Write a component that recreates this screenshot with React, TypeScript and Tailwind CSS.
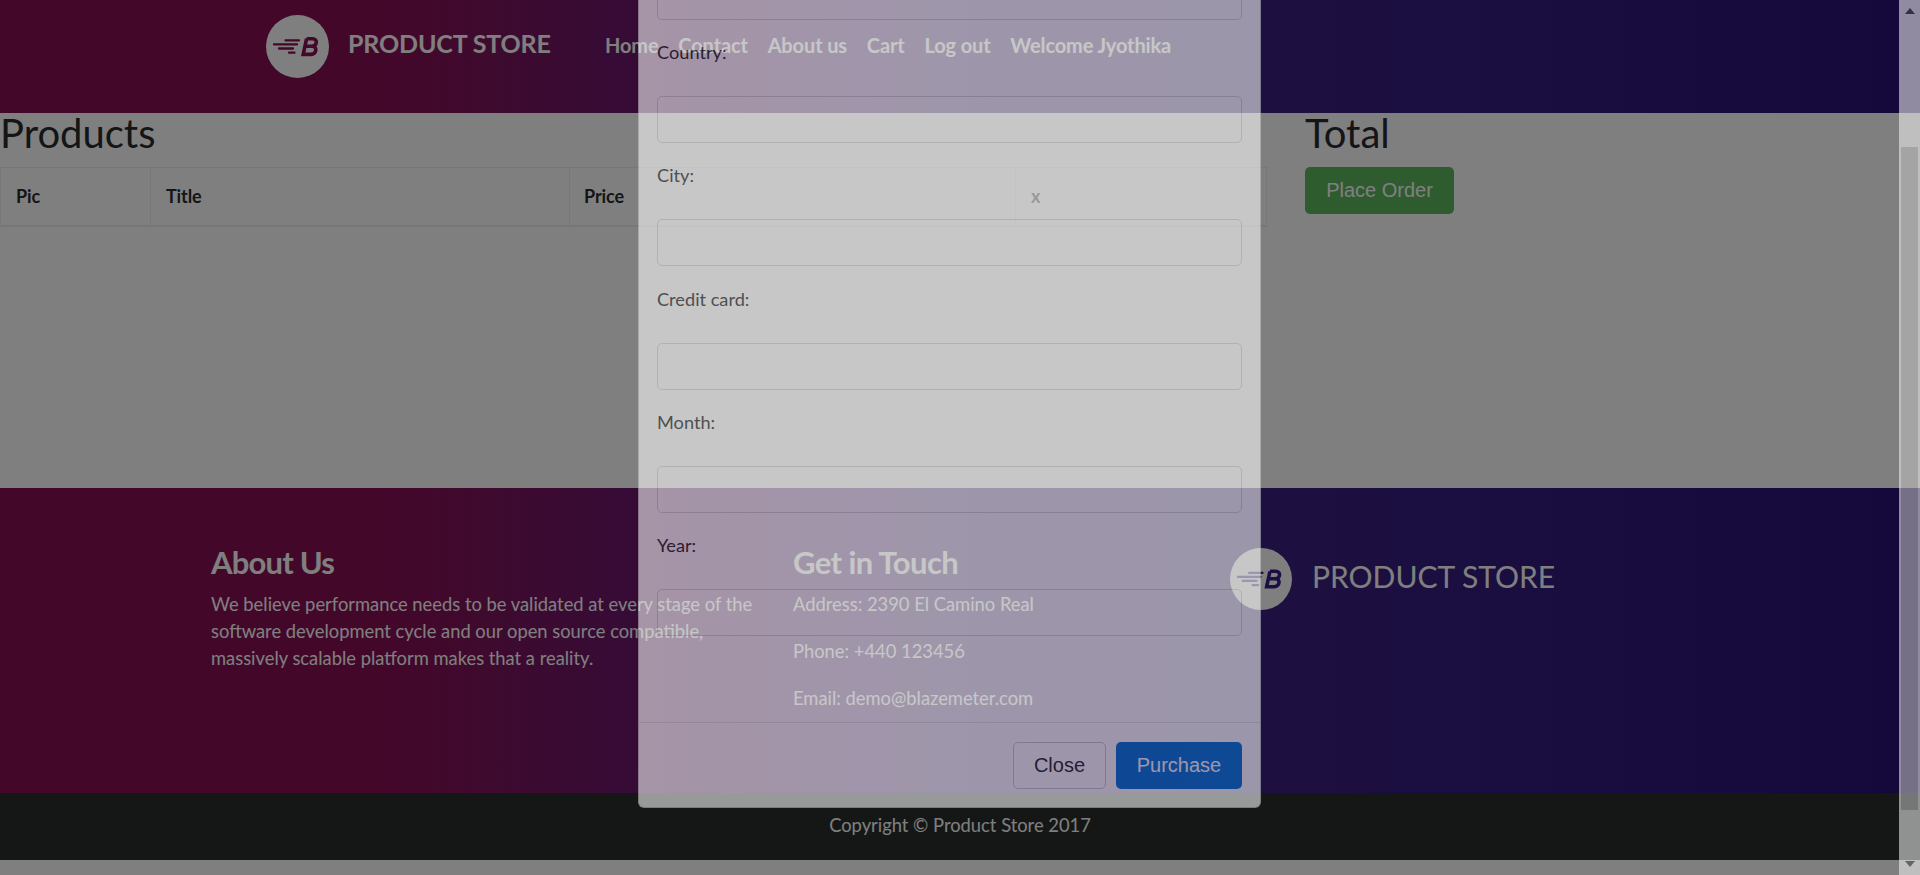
import React from "react";

const gradient =
  "bg-[linear-gradient(90deg,#860f54_0%,#860f54_20%,#7e145c_25%,#6e176b_32%,#5a1a76_40%,#44207f_50%,#3c2282_64%,#341a80_80%,#2a1074_100%)]";

function Logo({ className, ink }: { className: string; ink: string }) {
  return (
    <svg viewBox="0 0 63 63" className={className}>
      <circle cx="31.5" cy="31.5" r="31.5" fill="#fff" />
      <g stroke={ink} strokeWidth="2.3" strokeLinecap="round" fill="none">
        <path d="M19.5 25.3H33M8 29.3H31M13 33.5H27M23 37.7H28.5" />
      </g>
      <g stroke={ink} strokeWidth="3.6" fill="none" strokeLinejoin="miter">
        <path d="M40.6 23.7H46.5C52 23.7 51.4 31.2 46 31.2H39.2M46 31.2C51.8 31.2 50.6 39.4 45 39.4H37.2L40.6 23.7" />
      </g>
    </svg>
  );
}

const navItems = ["Home", "Contact", "About us", "Cart", "Log out", "Welcome Jyothika"];

function Header() {
  return (
    <header className={`flex h-[113px] items-start pl-[266px] text-white ${gradient}`}>
      <Logo className="mt-[15px] h-[63px] w-[63px] shrink-0" ink="#860f54" />
      <span className="mt-[23px] ml-[19px] w-[257px] text-[25px] leading-[40px] font-bold tracking-[-0.15px]">
        PRODUCT STORE
      </span>
      <nav className="mt-[31px] flex gap-[19.8px] text-[20px] leading-[28px] font-bold tracking-[-0.12px]">
        {navItems.map((item) => (
          <a key={item} className="whitespace-nowrap">
            {item}
          </a>
        ))}
      </nav>
    </header>
  );
}

function Cart() {
  return (
    <main className="flex h-[375px] bg-white text-[#292b2c]">
      <section className="w-[1267px]">
        <h2 className="h-[54px] text-[40px] leading-[40px]">Products</h2>
        <div className="grid h-[60px] grid-cols-[150px_419px_446px_252px] border border-b-2 border-[#eceeef] text-[18px] leading-[27px] font-bold tracking-[-0.1px]">
          <div className="border-r border-[#eceeef] px-[15px] pt-[15px]">Pic</div>
          <div className="border-r border-[#eceeef] px-[15px] pt-[15px]">Title</div>
          <div className="border-r border-[#eceeef] px-[14px] pt-[15px]">Price</div>
          <div className="px-[15px] pt-[15px]">x</div>
        </div>
      </section>
      <section className="ml-[38px]">
        <h2 className="h-[54px] text-[40px] leading-[40px]">Total</h2>
        <button className="h-[47px] w-[149px] rounded-[5px] bg-[#5cb85c] pb-[2px] font-['Liberation_Sans',sans-serif] text-[20px] text-white">
          Place Order
        </button>
      </section>
    </main>
  );
}

function Footer() {
  return (
    <footer className="text-white">
      <div className={`flex h-[305px] pl-[211px] text-[18.35px] leading-[27px] ${gradient}`}>
        <section className="mt-[56px] w-[582px]">
          <h4 className="mb-[11px] text-[31px] leading-[36px] font-bold tracking-[-0.8px]">About Us</h4>
          <p className="w-[560px]">
            We believe performance needs to be validated at every stage of the software development
            cycle and our open source compatible, massively scalable platform makes that a reality.
          </p>
        </section>
        <section className="mt-[56px] w-[437px]">
          <h4 className="mb-[11px] text-[31px] leading-[36px] font-bold tracking-[-0.6px]">
            Get in Touch
          </h4>
          <div className="flex flex-col gap-[20px]">
            <p>Address: 2390 El Camino Real</p>
            <p>Phone: +440 123456</p>
            <p>Email: demo@blazemeter.com</p>
          </div>
        </section>
        <section className="mt-[60px] flex gap-[20px]">
          <Logo className="h-[62px] w-[62px] shrink-0" ink="#381d8a" />
          <span className="mt-[9px] text-[30px] leading-[38px] whitespace-nowrap">PRODUCT STORE</span>
        </section>
      </div>
      <div className="h-[67px] bg-[#2b2f2d] pt-[19px] text-center text-[18.35px] leading-[27px]">
        Copyright © Product Store 2017
      </div>
    </footer>
  );
}

const fields = ["Country:", "City:", "Credit card:", "Month:", "Year:"];

function OrderDialog() {
  return (
    <div className="absolute inset-0 flex opacity-[0.56]">
      <div className="ml-[638px] h-[808px] w-[623px] rounded-b-[6px] border border-t-0 border-black/20 bg-white text-[18.2px] leading-[27px] text-[#292b2c]">
        <div className="h-[723px] border-b border-[#e5e5e5] px-[18px]">
          <div className="h-[20px] rounded-b-[5px] border border-t-0 border-black/15" />
          {fields.map((label) => (
            <div key={label} className="h-[123.3px] pt-[19px]">
              <label className="block h-[57px]">{label}</label>
              <div className="h-[47px] rounded-[5px] border border-black/15" />
            </div>
          ))}
        </div>
        <div className="flex justify-end gap-[10px] px-[18px] pt-[19px] font-['Liberation_Sans',sans-serif] text-[20px]">
          <button className="h-[47px] w-[93px] rounded-[5px] border border-[#ccc] pb-[1px]">Close</button>
          <button className="h-[47px] w-[126px] rounded-[5px] bg-[#0275d8] pb-[1px] text-white">Purchase</button>
        </div>
      </div>
      <div className="ml-auto flex w-[21px] flex-col items-center bg-[#f1f1f1]">
        <svg viewBox="0 0 10 6" className="mt-[8px] h-[6px] w-[10px]">
          <path d="M5 0L10 6H0Z" fill="#505050" />
        </svg>
        <div className="mt-[133px] h-[663px] w-[17px] bg-[#c1c1c1]" />
        <svg viewBox="0 0 10 6" className="mt-[51px] h-[6px] w-[10px]">
          <path d="M5 6L10 0H0Z" fill="#505050" />
        </svg>
      </div>
    </div>
  );
}

export default function App() {
  return (
    <div className="relative h-[875px] w-[1920px] overflow-hidden bg-white font-[Lato,sans-serif]">
      <Header />
      <Cart />
      <Footer />
      <div className="absolute inset-0 bg-black/50" />
      <OrderDialog />
    </div>
  );
}
